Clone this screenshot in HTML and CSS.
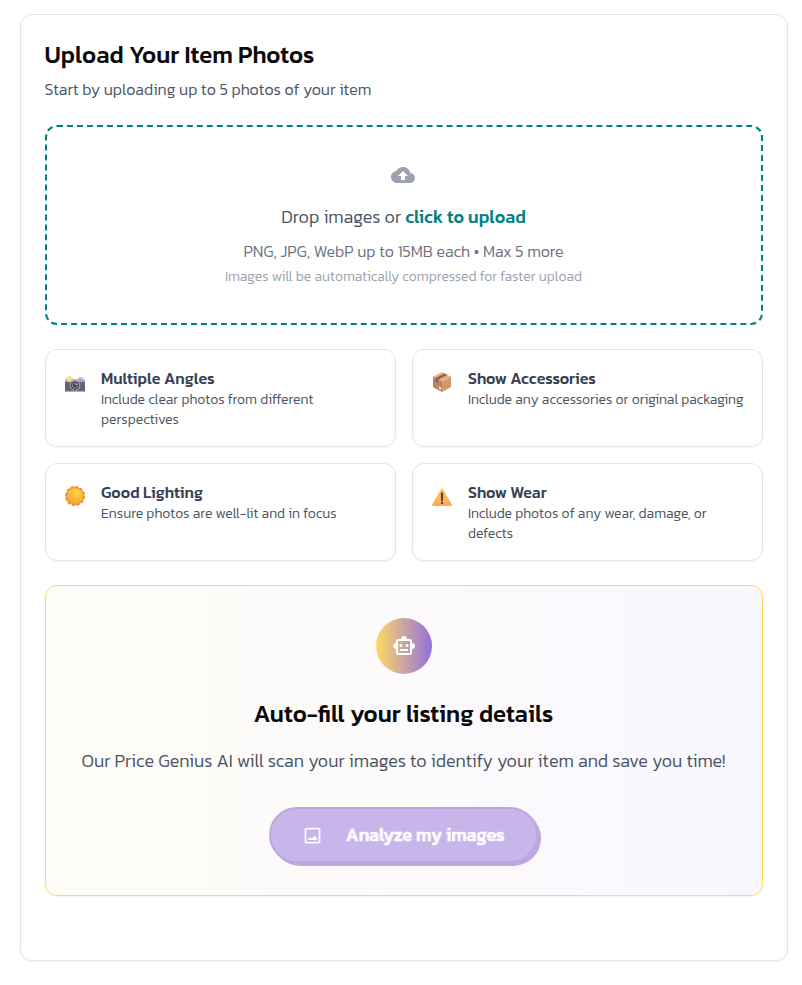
FILE: index.html
```html
<!DOCTYPE html>
<html lang="en">
<head>
<meta charset="utf-8">
<title>Upload Your Item Photos</title>
<link rel="stylesheet" href="styles.css">
</head>
<body>
<main class="card">
  <h1 class="title">Upload Your Item Photos</h1>
  <p class="subtitle">Start by uploading up to 5 photos of your item</p>

  <section class="dropzone">
    <svg class="cloud" viewBox="0 0 24 24"><path d="M19.350 10.040C18.670 6.590 15.640 4 12 4 9.110 4 6.600 5.640 5.350 8.040 2.340 8.360 0 10.910 0 14c0 3.310 2.690 6 6 6h13c2.760 0 5-2.240 5-5 0-2.640-2.050-4.780-4.650-4.960zM14 13v4h-4v-4H7l5-5 5 5h-3z"/></svg>
    <p class="drop-main">Drop images or <strong class="link">click to upload</strong></p>
    <p class="drop-types">PNG, JPG, WebP up to 15MB each • Max 5 more</p>
    <p class="drop-note">Images will be automatically compressed for faster upload</p>
  </section>

  <section class="tips">
    <article class="tip">
      <svg class="emoji camera" viewBox="0 0 24 24">
        <defs><linearGradient id="cam" x1="0" y1="0" x2="0" y2="1"><stop offset="0" stop-color="#c9c0da"/><stop offset=".3" stop-color="#a99fba"/><stop offset=".32" stop-color="#6d6678"/><stop offset="1" stop-color="#605a69"/></linearGradient></defs>
        <path d="M2 8.500q0-1.500 1.500-1.500H15l1-1.800h4l.6 1.800q1.400.2 1.400 1.600V19q0 1-1 1H3q-1 0-1-1z" fill="url(#cam)"/>
        <path d="M2 18.700h20V19q0 1-1 1H3q-1 0-1-1z" fill="#b6a5cc"/>
        <circle cx="12" cy="13.400" r="5.200" fill="#c5bdd0"/><circle cx="12" cy="13.400" r="4.500" fill="#514b5d"/><circle cx="12" cy="13.400" r="3" fill="#8c83a0"/><circle cx="12" cy="13.400" r="2.200" fill="#4b4459"/><circle cx="13.200" cy="12.200" r=".7" fill="#ddd7e8"/>
        <path d="M6.200 3 10 6.700 6.200 10.400 2.500 6.700z" fill="#fbd98a"/><path d="M6.200 4.800 8.100 6.700 6.200 8.600 4.400 6.700z" fill="#ffe59c"/>
      </svg>
      <div><h2 class="tip-title">Multiple Angles</h2><p class="tip-text">Include clear photos from different<br>perspectives</p></div>
    </article>
    <article class="tip">
      <svg class="emoji" viewBox="0 0 24 24">
        <path d="M12 2 21 6.700 12 11.500 3 6.700z" fill="#e0b281"/><path d="M3 6.700 12 11.500V22L3 17.300z" fill="#bd8462"/><path d="M21 6.700 12 11.500V22l9-4.700z" fill="#d3976b"/>
        <path d="M5.600 8.100 14.600 3.400 17.400 4.800 8.300 9.600V13L5.600 11.500z" fill="#926050"/>
        <path d="M9 16.400l2.200 1.200v2.300L9 18.700z" fill="#efe1e5"/>
      </svg>
      <div><h2 class="tip-title">Show Accessories</h2><p class="tip-text">Include any accessories or original packaging</p></div>
    </article>
    <article class="tip">
      <svg class="emoji" viewBox="0 0 24 24">
        <defs><radialGradient id="sun" cx=".6" cy=".3" r=".8"><stop offset="0" stop-color="#fdd444"/><stop offset="1" stop-color="#f0a32d"/></radialGradient></defs>
        <circle cx="12" cy="12" r="9.300" fill="#f58b3c"/><circle class="rays" cx="12" cy="12" r="8.900"/>
        <circle cx="12" cy="12" r="8.100" fill="url(#sun)"/>
      </svg>
      <div><h2 class="tip-title">Good Lighting</h2><p class="tip-text">Ensure photos are well-lit and in focus</p></div>
    </article>
    <article class="tip">
      <svg class="emoji warning" viewBox="0 0 24 24">
        <defs><linearGradient id="warn" x1="0" y1="0" x2="0" y2="1"><stop offset="0" stop-color="#ffcf50"/><stop offset="1" stop-color="#ffa558"/></linearGradient></defs>
        <path d="M11.200 3.700q.8-1.200 1.600 0L21.800 19.500q.5 1.300-.8 1.500H3q-1.300-.2-.8-1.500z" fill="url(#warn)"/>
        <path d="M10.800 7.500h2.400L12.900 16h-1.800z" fill="#4d3e56"/><circle cx="12" cy="18" r="1.200" fill="#4d3e56"/>
      </svg>
      <div><h2 class="tip-title">Show Wear</h2><p class="tip-text">Include photos of any wear, damage, or<br>defects</p></div>
    </article>
  </section>

  <section class="autofill">
    <div class="bot">
      <svg class="bot-icon" viewBox="0 0 24 24"><path d="M20 9V7c0-1.100-.9-2-2-2h-3c0-1.660-1.340-3-3-3S9 3.340 9 5H6c-1.100 0-2 .9-2 2v2c-1.660 0-3 1.340-3 3s1.340 3 3 3v4c0 1.100.9 2 2 2h12c1.100 0 2-.9 2-2v-4c1.660 0 3-1.340 3-3s-1.340-3-3-3zm-2 10H6V7h12v12zM9 13c-.83 0-1.500-.67-1.500-1.500S8.170 10 9 10s1.500.67 1.500 1.500S9.830 13 9 13zm7.500-1.500c0 .83-.67 1.500-1.500 1.500s-1.500-.67-1.500-1.500.67-1.500 1.500-1.500 1.500.67 1.500 1.500zM8 15h8v2H8z"/></svg>
    </div>
    <h2 class="auto-title">Auto-fill your listing details</h2>
    <p class="auto-text">Our Price Genius AI will scan your images to identify your item and save you time!</p>
    <button class="analyze" disabled>
      <svg class="image-icon" viewBox="0 0 24 24"><path d="M19 5v14H5V5h14m0-2H5c-1.100 0-2 .9-2 2v14c0 1.100.9 2 2 2h14c1.100 0 2-.9 2-2V5c0-1.100-.9-2-2-2zM6.800 17v-1l2.300-2.300 1.900 1.700 3.500-3.200 2.700 3.300V17z"/></svg>
      <span class="analyze-label">Analyze my images</span>
    </button>
  </section>
</main>
</body>
</html>
```
FILE: styles.css
```css
* { box-sizing: border-box; }
body { margin: 0; padding: 14px 14.500px 24px 19.500px; background: #fff; font-family: Kanit, "Noto Sans", sans-serif; font-weight: 300; }
h1, h2, p { margin: 0; white-space: nowrap; }
.card { height: 947px; padding: 24px; border: 1px solid #e5e5e5; border-radius: 12px; box-shadow: 0 1px 2px rgba(0,0,0,.05); }
.title { font-size: 24px; line-height: 32px; font-weight: 500; color: #0a0a0a; }
.subtitle { margin-top: 6px; font-size: 16px; line-height: 24px; color: #4b5563; }
.dropzone { display: flex; flex-direction: column; align-items: center; height: 200px; margin-top: 24px; padding-top: 36px; border: 2px dashed #008080; border-radius: 12px; }
.cloud { width: 24px; height: 24px; margin-right: 1px; fill: #9ca3af; }
.drop-main { margin-top: 16px; font-size: 18px; line-height: 28px; color: #4b5563; }
.link { font-weight: 500; color: #008080; }
.drop-types { margin-top: 8px; font-size: 16px; line-height: 24px; color: #6b7280; }
.drop-note { margin-top: 4px; font-size: 14px; line-height: 20px; color: #9ca3af; }
.tips { display: grid; grid-template-columns: 1fr 1fr; grid-auto-rows: 98px; gap: 16px; margin-top: 24px; }
.tip { display: flex; gap: 14px; padding: 16px 16px 0 17.500px; border: 1px solid #e5e5e5; border-radius: 12px; box-shadow: 0 1px 2px rgba(0,0,0,.05); }
.emoji { flex: none; width: 24px; height: 24px; margin-top: 4px; }
.camera { margin-top: 6px; }
.warning { margin-top: 5px; }
.rays { fill: none; stroke: #f58b3c; stroke-width: 2.400; stroke-dasharray: 2.800 1.860; }
.tip-title { font-size: 16px; line-height: 24px; font-weight: 500; color: #374151; }
.tip-text { font-size: 14px; line-height: 20px; color: #4b5563; }
.autofill { display: flex; flex-direction: column; align-items: center; height: 311px; margin-top: 24px; padding-top: 32px; border: 1px solid #ffd866; border-radius: 12px; background: linear-gradient(90deg, #fffdf7, #f9f7fe); box-shadow: 0 1px 2px rgba(0,0,0,.05); }
.bot { display: grid; place-items: center; width: 56px; height: 56px; border-radius: 50%; background: linear-gradient(90deg, #ffd966, #9370db); }
.bot-icon { width: 24px; height: 24px; fill: #fff; }
.auto-title { margin-top: 24px; font-size: 24px; line-height: 32px; font-weight: 500; color: #0a0a0a; }
.auto-text { margin-top: 17px; font-size: 18px; line-height: 28px; color: #4b5563; }
.analyze { display: flex; align-items: center; gap: 23px; width: 269px; height: 56px; margin-top: 32px; padding: 0 0 0 30.800px; border: 2px solid #bca8de; border-radius: 28px; background: #c8b5ea; box-shadow: 3px 3px 0 #bca8de; color: #fff; font: inherit; }
.image-icon { flex: none; width: 21px; height: 21px; fill: #fdfbff; }
.analyze-label { font-size: 18px; line-height: 28px; font-weight: 500; color: #fdfbff; -webkit-text-stroke: .6px #fdfbff; white-space: nowrap; }
```
